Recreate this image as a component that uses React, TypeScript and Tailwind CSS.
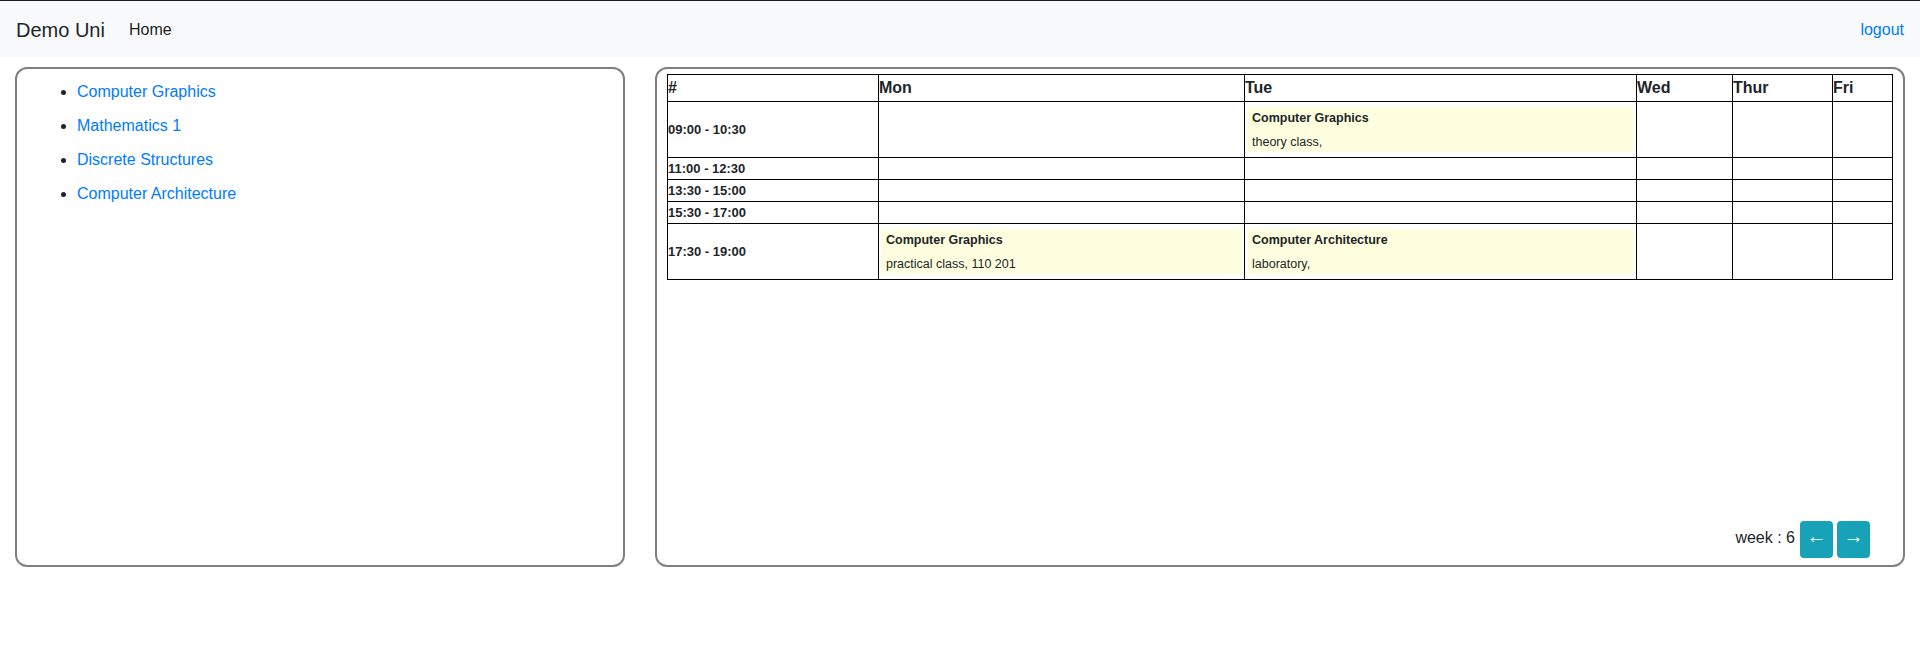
import React from "react";

type Lesson = {
  title: string;
  info: string;
};

const courses = ["Computer Graphics", "Mathematics 1", "Discrete Structures", "Computer Architecture"];

const days = ["Mon", "Tue", "Wed", "Thur", "Fri"];

// one entry per time slot, each row holds a lesson (or nothing) for each day
const slots: { time: string; tall: boolean; cells: (Lesson | null)[] }[] = [
  {
    time: "09:00 - 10:30",
    tall: true,
    cells: [null, { title: "Computer Graphics", info: "theory class," }, null, null, null],
  },
  { time: "11:00 - 12:30", tall: false, cells: [null, null, null, null, null] },
  { time: "13:30 - 15:00", tall: false, cells: [null, null, null, null, null] },
  { time: "15:30 - 17:00", tall: false, cells: [null, null, null, null, null] },
  {
    time: "17:30 - 19:00",
    tall: true,
    cells: [
      { title: "Computer Graphics", info: "practical class, 110 201" },
      { title: "Computer Architecture", info: "laboratory," },
      null,
      null,
      null,
    ],
  },
];

const colWidths = ["w-[211px]", "w-[366px]", "w-[392px]", "w-[96px]", "w-[100px]", "w-auto"];

const LessonBox: React.FC<Lesson> = ({ title, info }) => {
  return (
    <div className="bg-[#ffffe0] ml-[2px] mr-[2px] px-[5px] pt-[1px] text-[12.5px] text-[#212529]">
      <div className="font-bold leading-[20px]">{title}</div>
      <div className="leading-[20px] mt-[4px]">{info}</div>
    </div>
  );
};

const Navbar = () => {
  return (
    <nav className="h-[57px] border-t border-[#1b1b1b] bg-[#f8f9fa] flex items-center px-4 pt-[1px]">
      <span className="text-[20px] text-[#212529] mr-4">Demo Uni</span>
      <span className="px-2 text-[16px] text-black/90">Home</span>
      <span className="ml-auto text-[16px] text-[#007bff]">logout</span>
    </nav>
  );
};

const CourseList = () => {
  return (
    <div className="w-[610px] h-[500px] border-2 border-[#808080] rounded-[12px] pt-[11px] pl-[20px]">
      <ul className="list-disc pl-[40px] text-[16px] leading-[24px]">
        {courses.map((c) => (
          <li key={c} className="mb-[10px] marker:text-[#212529]">
            <span className="text-[#007bff]">{c}</span>
          </li>
        ))}
      </ul>
    </div>
  );
};

const Timetable = () => {
  return (
    <div className="flex-1 h-[500px] border-2 border-[#808080] rounded-[12px] pt-[5px] px-[10px] flex flex-col">
      <table className="w-full table-fixed border-collapse border border-black text-[#212529]">
        <thead>
          <tr className="h-[27px]">
            <th className={`${colWidths[0]} border border-black text-left text-[16px] font-bold leading-[24px] p-0`}>#</th>
            {days.map((d, i) => (
              <th key={d} className={`${colWidths[i + 1]} border border-black text-left text-[16px] font-bold leading-[24px] p-0`}>
                {d}
              </th>
            ))}
          </tr>
        </thead>
        <tbody>
          {slots.map((s) => (
            <tr key={s.time} className={s.tall ? "h-[56px]" : "h-[22px]"}>
              <td className="border border-black p-0 text-[13px] font-bold leading-[20px] align-middle">{s.time}</td>
              {s.cells.map((c, i) => (
                <td key={i} className="border border-black px-0 py-[5px] align-middle">
                  {c && <LessonBox title={c.title} info={c.info} />}
                </td>
              ))}
            </tr>
          ))}
        </tbody>
      </table>

      <div className="mt-auto mb-[7px] mr-[23px] flex items-center justify-end gap-[4px]">
        <span className="text-[16px] text-[#212529] mr-[1px] pb-[3px]">week : 6</span>
        <button className="w-[33px] h-[37px] rounded-[4px] bg-[#17a2b8] text-white text-[20px] leading-none flex items-center justify-center pb-[7px]">
          ←
        </button>
        <button className="w-[33px] h-[37px] rounded-[4px] bg-[#17a2b8] text-white text-[20px] leading-none flex items-center justify-center pb-[7px]">
          →
        </button>
      </div>
    </div>
  );
};

export default function App() {
  return (
    <div className="min-h-[653px] bg-white font-['Liberation_Sans',Arial,sans-serif]">
      <Navbar />
      <div className="flex gap-[30px] px-[15px] mt-[10px]">
        <CourseList />
        <Timetable />
      </div>
    </div>
  );
}
